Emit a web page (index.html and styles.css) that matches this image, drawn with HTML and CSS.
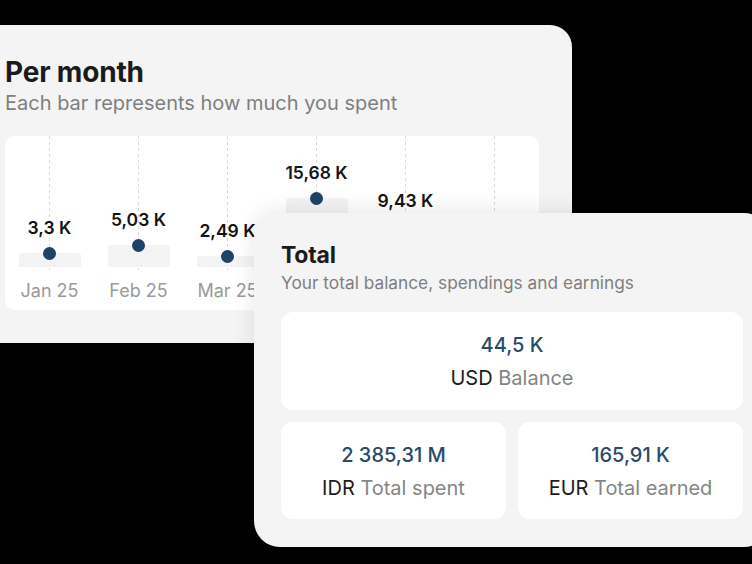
FILE: index.html
```html
<!DOCTYPE html>
<html>
<head>
<meta charset="utf-8">
<link rel="stylesheet" href="styles.css">
</head>
<body>
<div class="stage">
  <section class="card card-month">
    <h1 class="title">Per month</h1>
    <p class="subtitle">Each bar represents how much you spent</p>
    <div class="chart">
      <div class="col">
        <div class="plot"><span class="val">3,3 K</span><span class="dot"></span><span class="bar" style="height:14px"></span></div>
        <div class="month">Jan 25</div>
      </div>
      <div class="col">
        <div class="plot"><span class="val">5,03 K</span><span class="dot"></span><span class="bar" style="height:22px"></span></div>
        <div class="month">Feb 25</div>
      </div>
      <div class="col">
        <div class="plot"><span class="val">2,49 K</span><span class="dot"></span><span class="bar" style="height:11px"></span></div>
        <div class="month">Mar 25</div>
      </div>
      <div class="col">
        <div class="plot"><span class="val">15,68 K</span><span class="dot"></span><span class="bar" style="height:69px"></span></div>
        <div class="month">Apr 25</div>
      </div>
      <div class="col">
        <div class="plot"><span class="val">9,43 K</span><span class="dot"></span><span class="bar" style="height:41px"></span></div>
        <div class="month">May 25</div>
      </div>
      <div class="col">
        <div class="plot"><span class="val">1,2 K</span><span class="dot"></span><span class="bar" style="height:5px"></span></div>
        <div class="month">Jun 25</div>
      </div>
    </div>
  </section>

  <section class="card card-total">
    <h1 class="title title-sm">Total</h1>
    <p class="subtitle small">Your total balance, spendings and earnings</p>
    <div class="stats">
      <div class="stat wide">
        <div class="amount">44,5 K</div>
        <div class="label"><span class="cur">USD</span> Balance</div>
      </div>
      <div class="stat">
        <div class="amount">2 385,31 M</div>
        <div class="label"><span class="cur">IDR</span> Total spent</div>
      </div>
      <div class="stat">
        <div class="amount">165,91 K</div>
        <div class="label"><span class="cur">EUR</span> Total earned</div>
      </div>
    </div>
  </section>
</div>
</body>
</html>
```

FILE: styles.css
```css
html, body {
  margin: 0;
  padding: 0;
}
body {
  background: #000;
  width: 752px;
  height: 564px;
  overflow: hidden;
  font-family: Inter, "Noto Sans", "Liberation Sans", sans-serif;
}
.stage {
  position: relative;
  height: 564px;
  padding-top: 25px;
  box-sizing: border-box;
}
.card {
  background: #f4f4f4;
  box-sizing: border-box;
}
.card-month {
  margin-left: -22px;
  width: 594px;
  height: 318px;
  padding: 30px 33px 33px 27px;
  border-radius: 22px;
}
.title {
  margin: 0;
  font-size: 28px;
  line-height: 34px;
  font-weight: 700;
  color: #1b1b1b;
  letter-spacing: -0.2px;
}
.title.title-sm {
  font-size: 23px;
  line-height: 30px;
}
.subtitle {
  margin: 1px 0 0;
  font-size: 20px;
  line-height: 26px;
  color: #7f7f7f;
}
.subtitle.small {
  margin-top: 2px;
  font-size: 17.3px;
  line-height: 22px;
}
.chart {
  margin-top: 20px;
  height: 174px;
  background: #fff;
  border-radius: 10px;
  display: grid;
  grid-template-columns: repeat(6, 89px);
  overflow: hidden;
}
.col {
  display: flex;
  flex-direction: column;
}
.plot {
  height: 134px;
  box-sizing: border-box;
  padding-bottom: 3px;
  display: flex;
  flex-direction: column;
  justify-content: flex-end;
  align-items: center;
  background-image: linear-gradient(to bottom, #d8d8d8 50%, transparent 50%);
  background-size: 1px 6px;
  background-position: 44px 0;
  background-repeat: repeat-y;
}
.val {
  font-size: 17.5px;
  line-height: 20px;
  font-weight: 600;
  color: #141414;
  margin-bottom: 9px;
  white-space: nowrap;
}
.dot {
  width: 13px;
  height: 13px;
  border-radius: 50%;
  background: #1f4364;
  margin-bottom: -6.5px;
  position: relative;
  z-index: 1;
}
.bar {
  width: 62px;
  background: #f3f3f3;
  border-radius: 3px 3px 0 0;
}
.month {
  text-align: center;
  padding-top: 9px;
  font-size: 18px;
  line-height: 24px;
  color: #9a9a9a;
}
.card-total {
  position: absolute;
  z-index: 2;
  left: 254px;
  top: 213px;
  width: 516px;
  padding: 27px 27px 28px;
  border-radius: 26px;
  box-shadow: 0 -2px 22px rgba(0, 0, 0, 0.10);
}
.stats {
  margin-top: 18px;
  display: grid;
  grid-template-columns: 1fr 1fr;
  gap: 12px;
}
.stat {
  background: #fff;
  border-radius: 12px;
  height: 97px;
  box-sizing: border-box;
  padding-top: 21px;
  display: flex;
  flex-direction: column;
  align-items: center;
  gap: 9px;
}
.stat.wide {
  grid-column: 1 / 3;
  height: 98px;
}
.amount {
  font-size: 20px;
  line-height: 24px;
  font-weight: 500;
  color: #284a6b;
}
.label {
  font-size: 20px;
  line-height: 24px;
  color: #858585;
}
.cur {
  color: #1c1c1c;
}
```
